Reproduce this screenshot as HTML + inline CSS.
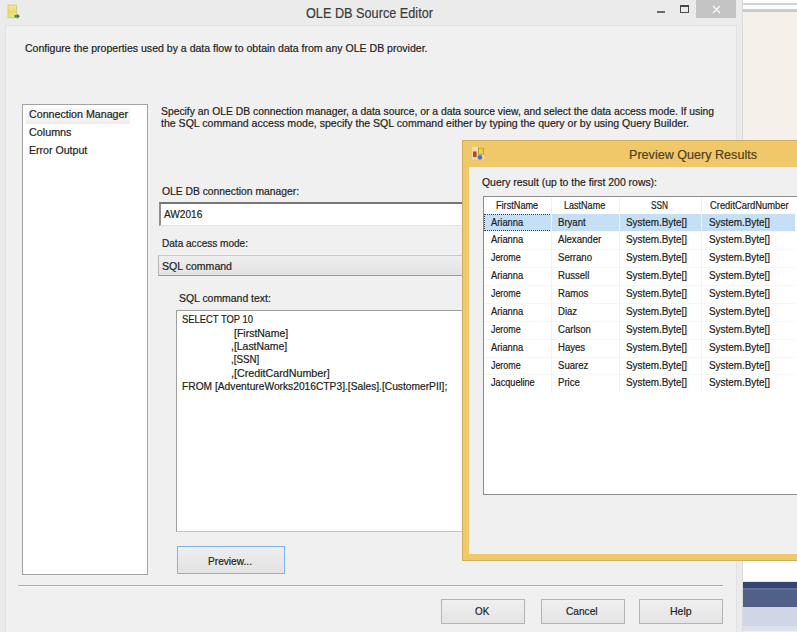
<!DOCTYPE html>
<html><head><meta charset="utf-8">
<style>
html,body{margin:0;padding:0;width:797px;height:632px;overflow:hidden;background:#f5f1ea;position:relative;}
*{box-sizing:border-box;}
.a{position:absolute;}
.t{position:absolute;font-family:"Liberation Sans",sans-serif;white-space:nowrap;color:#222;-webkit-text-stroke:0.2px currentColor;}
.btn{position:absolute;background:linear-gradient(#f0f0f0,#e4e4e4);border:1px solid #b4b4b4;}
</style></head><body>
<!-- right background window -->
<div class="a" style="left:743px;top:0;width:54px;height:3px;background:#fdfdfd"></div>
<div class="a" style="left:743px;top:3px;width:54px;height:2px;background:#d2d2d2"></div>
<div class="a" style="left:743px;top:5px;width:54px;height:4px;background:#fbfbfb"></div>
<div class="a" style="left:743px;top:9px;width:54px;height:3px;background:#c9cdd1"></div>
<div class="a" style="left:743px;top:545px;width:54px;height:37px;background:#ffffff"></div>
<div class="a" style="left:743px;top:581px;width:54px;height:1px;background:#e8e6e0"></div>
<div class="a" style="left:743px;top:582px;width:54px;height:6px;background:#34456f"></div>
<div class="a" style="left:743px;top:588px;width:54px;height:2px;background:#62719a"></div>
<div class="a" style="left:743px;top:590px;width:54px;height:17px;background:#516089"></div>
<div class="a" style="left:743px;top:607px;width:54px;height:19px;background:#d0d6e6"></div>
<div class="a" style="left:743px;top:626px;width:54px;height:5px;background:#dce1ed"></div>
<div class="a" style="left:743px;top:631px;width:54px;height:1px;background:#eef0f5"></div>

<!-- main dialog -->
<div class="a" style="left:0;top:0;width:743px;height:632px;background:#ebebeb;border-right:1px solid #d9d9d9"></div>
<div class="a" style="left:5px;top:25px;width:732px;height:607px;background:#f0f0f0;border:1px solid #e2e2e2;border-bottom:none"></div>
<!-- title icon -->
<svg class="a" style="left:0;top:0" width="24" height="24" viewBox="0 0 24 24">
 <defs><linearGradient id="yg" x1="0" x2="0" y1="0" y2="1"><stop offset="0" stop-color="#f4ea9a"/><stop offset="0.5" stop-color="#efd868"/><stop offset="1" stop-color="#e8e890"/></linearGradient></defs>
 <rect x="8" y="5" width="8.3" height="12.8" fill="url(#yg)" stroke="#c8b860" stroke-width="0.6"/>
 <path d="M14.5 15 L17 15 L17 13.8 L20 16.3 L17 18.8 L17 17.6 L14.5 17.6 Z" fill="#4a8a3a"/>
</svg>
<!-- caption buttons -->
<div class="a" style="left:657px;top:11px;width:8px;height:1.5px;background:#6a6a6a"></div>
<div class="a" style="left:680px;top:5px;width:9px;height:8px;border:1px solid #4a4a4a;border-top-width:2px"></div>
<div class="a" style="left:696px;top:0;width:40px;height:18px;background:#c4c4c4"></div>
<svg class="a" style="left:712px;top:5px" width="9" height="9" viewBox="0 0 9 9"><path d="M1 1 L8 8 M8 1 L1 8" stroke="#fafafa" stroke-width="1.3"/></svg>

<!-- list box -->
<div class="a" style="left:22px;top:104px;width:126px;height:471px;background:#fff;border:1px solid #a3a3a3"></div>
<div class="a" style="left:26px;top:108px;width:104px;height:16px;background:linear-gradient(#f8f8f8,#f4f4f4 70%,#ececec)"></div>

<div class="a" style="left:159px;top:202px;width:320px;height:24px;background:#fff;border:1px solid #e4e4e4;border-top:2px solid #777;border-left:2px solid #8e8e8e"></div>
<div class="a" style="left:158px;top:255px;width:320px;height:21px;background:linear-gradient(#efefef,#e3e3e3);border:1px solid #b5b5b5;border-top-color:#c8c8c8;border-bottom-color:#9c9c9c"></div>
<div class="a" style="left:176px;top:310px;width:300px;height:222px;background:#fff;border:1px solid #c4c4c4;border-top-color:#a0a0a0;border-left-color:#a0a0a0"></div>

<div class="a" style="left:177px;top:546px;width:108px;height:28px;background:linear-gradient(#eeeeee,#e3e3e3);border:1px solid #7eb4ea"></div>

<div class="a" style="left:18px;top:585px;width:705px;height:1px;background:#ababab"></div>
<div class="a" style="left:18px;top:586px;width:705px;height:1px;background:#fafafa"></div>

<div class="btn" style="left:441px;top:599px;width:84px;height:25px"></div>
<div class="btn" style="left:541px;top:599px;width:84px;height:25px"></div>
<div class="btn" style="left:639px;top:599px;width:84px;height:25px"></div>

<!-- preview window -->
<div class="a" style="left:462px;top:140px;width:340px;height:421px;background:#f0c86a;border:1px solid #cfad62"></div>
<div class="a" style="left:469px;top:167px;width:331px;height:387px;background:#f0f0f0"></div>
<svg class="a" style="left:465px;top:142px" width="30" height="25" viewBox="465 142 30 25">
 <rect x="472" y="147" width="12" height="12.5" fill="#f3e4c0" opacity="0.7"/>
 <rect x="473" y="151.5" width="3.6" height="5.6" fill="#a84a3a"/>
 <rect x="478.3" y="148" width="5.2" height="6.3" fill="#e8d040" stroke="#9a8a30" stroke-width="0.7"/>
 <circle cx="480" cy="157.4" r="2.4" fill="#4a70d8"/>
</svg>
<div class="a" style="left:483px;top:196px;width:320px;height:299px;background:#fff;border:1px solid #8c8c8c"></div>
<div class="a" style="left:551px;top:198px;width:1px;height:15px;background:#f0f0f0"></div>
<div class="a" style="left:619px;top:198px;width:1px;height:15px;background:#f0f0f0"></div>
<div class="a" style="left:701px;top:198px;width:1px;height:15px;background:#f0f0f0"></div>
<div class="a" style="left:484px;top:213.5px;width:311px;height:17.88px;background:#c4dff6"></div>
<div class="a" style="left:484px;top:213.5px;width:68px;height:17.88px;border:1px dotted #444"></div>
<div class="a" style="left:551px;top:213.50px;width:1px;height:17.88px;background:#f2f2f2"></div>
<div class="a" style="left:619px;top:213.50px;width:1px;height:17.88px;background:#f2f2f2"></div>
<div class="a" style="left:701px;top:213.50px;width:1px;height:17.88px;background:#f2f2f2"></div>
<div class="a" style="left:551px;top:231.38px;width:1px;height:17.88px;background:#f2f2f2"></div>
<div class="a" style="left:619px;top:231.38px;width:1px;height:17.88px;background:#f2f2f2"></div>
<div class="a" style="left:701px;top:231.38px;width:1px;height:17.88px;background:#f2f2f2"></div>
<div class="a" style="left:484px;top:231.38px;width:311px;height:1px;background:#f6f6f6"></div>
<div class="a" style="left:551px;top:249.26px;width:1px;height:17.88px;background:#f2f2f2"></div>
<div class="a" style="left:619px;top:249.26px;width:1px;height:17.88px;background:#f2f2f2"></div>
<div class="a" style="left:701px;top:249.26px;width:1px;height:17.88px;background:#f2f2f2"></div>
<div class="a" style="left:484px;top:249.26px;width:311px;height:1px;background:#f6f6f6"></div>
<div class="a" style="left:551px;top:267.14px;width:1px;height:17.88px;background:#f2f2f2"></div>
<div class="a" style="left:619px;top:267.14px;width:1px;height:17.88px;background:#f2f2f2"></div>
<div class="a" style="left:701px;top:267.14px;width:1px;height:17.88px;background:#f2f2f2"></div>
<div class="a" style="left:484px;top:267.14px;width:311px;height:1px;background:#f6f6f6"></div>
<div class="a" style="left:551px;top:285.02px;width:1px;height:17.88px;background:#f2f2f2"></div>
<div class="a" style="left:619px;top:285.02px;width:1px;height:17.88px;background:#f2f2f2"></div>
<div class="a" style="left:701px;top:285.02px;width:1px;height:17.88px;background:#f2f2f2"></div>
<div class="a" style="left:484px;top:285.02px;width:311px;height:1px;background:#f6f6f6"></div>
<div class="a" style="left:551px;top:302.90px;width:1px;height:17.88px;background:#f2f2f2"></div>
<div class="a" style="left:619px;top:302.90px;width:1px;height:17.88px;background:#f2f2f2"></div>
<div class="a" style="left:701px;top:302.90px;width:1px;height:17.88px;background:#f2f2f2"></div>
<div class="a" style="left:484px;top:302.90px;width:311px;height:1px;background:#f6f6f6"></div>
<div class="a" style="left:551px;top:320.78px;width:1px;height:17.88px;background:#f2f2f2"></div>
<div class="a" style="left:619px;top:320.78px;width:1px;height:17.88px;background:#f2f2f2"></div>
<div class="a" style="left:701px;top:320.78px;width:1px;height:17.88px;background:#f2f2f2"></div>
<div class="a" style="left:484px;top:320.78px;width:311px;height:1px;background:#f6f6f6"></div>
<div class="a" style="left:551px;top:338.66px;width:1px;height:17.88px;background:#f2f2f2"></div>
<div class="a" style="left:619px;top:338.66px;width:1px;height:17.88px;background:#f2f2f2"></div>
<div class="a" style="left:701px;top:338.66px;width:1px;height:17.88px;background:#f2f2f2"></div>
<div class="a" style="left:484px;top:338.66px;width:311px;height:1px;background:#f6f6f6"></div>
<div class="a" style="left:551px;top:356.54px;width:1px;height:17.88px;background:#f2f2f2"></div>
<div class="a" style="left:619px;top:356.54px;width:1px;height:17.88px;background:#f2f2f2"></div>
<div class="a" style="left:701px;top:356.54px;width:1px;height:17.88px;background:#f2f2f2"></div>
<div class="a" style="left:484px;top:356.54px;width:311px;height:1px;background:#f6f6f6"></div>
<div class="a" style="left:551px;top:374.42px;width:1px;height:17.88px;background:#f2f2f2"></div>
<div class="a" style="left:619px;top:374.42px;width:1px;height:17.88px;background:#f2f2f2"></div>
<div class="a" style="left:701px;top:374.42px;width:1px;height:17.88px;background:#f2f2f2"></div>
<div class="a" style="left:484px;top:374.42px;width:311px;height:1px;background:#f6f6f6"></div>
<div class="t" style="left:306.0px;top:4.62px;font-size:13.8px;line-height:17px;transform:scaleX(0.9201);transform-origin:0 0;color:#3c3c3c">OLE DB Source Editor</div>
<div class="t" style="left:25.3px;top:41.19px;font-size:11px;line-height:14px;transform:scaleX(0.9582);transform-origin:0 0;">Configure the properties used by a data flow to obtain data from any OLE DB provider.</div>
<div class="t" style="left:28.7px;top:107.49px;font-size:11px;line-height:14px;transform:scaleX(0.9694);transform-origin:0 0;">Connection Manager</div>
<div class="t" style="left:28.7px;top:124.99px;font-size:11px;line-height:14px;transform:scaleX(0.9791);transform-origin:0 0;">Columns</div>
<div class="t" style="left:28.7px;top:142.59px;font-size:11px;line-height:14px;transform:scaleX(0.9631);transform-origin:0 0;">Error Output</div>
<div class="t" style="left:161.3px;top:104.19px;font-size:11px;line-height:14px;transform:scaleX(0.9401);transform-origin:0 0;">Specify an OLE DB connection manager, a data source, or a data source view, and select the data access mode. If using</div>
<div class="t" style="left:161.3px;top:116.49px;font-size:11px;line-height:14px;transform:scaleX(0.9599);transform-origin:0 0;">the SQL command access mode, specify the SQL command either by typing the query or by using Query Builder.</div>
<div class="t" style="left:161.5px;top:183.59px;font-size:11px;line-height:14px;transform:scaleX(0.9375);transform-origin:0 0;">OLE DB connection manager:</div>
<div class="t" style="left:163.7px;top:207.19px;font-size:11px;line-height:14px;transform:scaleX(0.9163);transform-origin:0 0;">AW2016</div>
<div class="t" style="left:161.5px;top:235.69px;font-size:11px;line-height:14px;transform:scaleX(0.9134);transform-origin:0 0;">Data access mode:</div>
<div class="t" style="left:161.5px;top:258.99px;font-size:11px;line-height:14px;transform:scaleX(0.9593);transform-origin:0 0;">SQL command</div>
<div class="t" style="left:179.0px;top:291.19px;font-size:11px;line-height:14px;transform:scaleX(0.9482);transform-origin:0 0;">SQL command text:</div>
<div class="t" style="left:181.8px;top:313.00px;font-size:10.4px;line-height:13px;transform:scaleX(0.9059);transform-origin:0 0;">SELECT TOP 10</div>
<div class="t" style="left:234.3px;top:326.80px;font-size:10.4px;line-height:13px;transform:scaleX(1.0093);transform-origin:0 0;">[FirstName]</div>
<div class="t" style="left:231.3px;top:340.30px;font-size:10.4px;line-height:13px;transform:scaleX(1.0030);transform-origin:0 0;">,[LastName]</div>
<div class="t" style="left:231.3px;top:353.40px;font-size:10.4px;line-height:13px;transform:scaleX(0.9424);transform-origin:0 0;">,[SSN]</div>
<div class="t" style="left:231.3px;top:366.70px;font-size:10.4px;line-height:13px;transform:scaleX(1.0307);transform-origin:0 0;">,[CreditCardNumber]</div>
<div class="t" style="left:181.8px;top:379.50px;font-size:10.4px;line-height:13px;transform:scaleX(0.9845);transform-origin:0 0;">FROM [AdventureWorks2016CTP3].[Sales].[CustomerPII];</div>
<div class="t" style="left:208.3px;top:553.69px;font-size:11px;line-height:14px;transform:scaleX(0.9227);transform-origin:0 0;">Preview...</div>
<div class="t" style="left:475.1px;top:604.19px;font-size:11px;line-height:14px;transform:scaleX(0.8990);transform-origin:0 0;">OK</div>
<div class="t" style="left:566.0px;top:604.19px;font-size:11px;line-height:14px;transform:scaleX(0.9226);transform-origin:0 0;">Cancel</div>
<div class="t" style="left:670.0px;top:604.19px;font-size:11px;line-height:14px;transform:scaleX(0.9547);transform-origin:0 0;">Help</div>
<div class="t" style="left:629.2px;top:146.19px;font-size:13.6px;line-height:17px;transform:scaleX(0.9259);transform-origin:0 0;color:#4e3f1a">Preview Query Results</div>
<div class="t" style="left:482.0px;top:175.49px;font-size:11px;line-height:14px;transform:scaleX(0.9478);transform-origin:0 0;">Query result (up to the first 200 rows):</div>
<div class="t" style="left:496.0px;top:200.03px;font-size:10px;line-height:12px;transform:scaleX(0.9149);transform-origin:0 0;">FirstName</div>
<div class="t" style="left:564.3px;top:200.03px;font-size:10px;line-height:12px;transform:scaleX(0.9039);transform-origin:0 0;">LastName</div>
<div class="t" style="left:651.3px;top:200.03px;font-size:10px;line-height:12px;transform:scaleX(0.8267);transform-origin:0 0;">SSN</div>
<div class="t" style="left:709.7px;top:200.03px;font-size:10px;line-height:12px;transform:scaleX(0.9366);transform-origin:0 0;">CreditCardNumber</div>
<div class="t" style="left:491.0px;top:216.53px;font-size:10px;line-height:12px;transform:scaleX(0.9342);transform-origin:0 0;">Arianna</div>
<div class="t" style="left:558.3px;top:216.53px;font-size:10px;line-height:12px;transform:scaleX(0.9558);transform-origin:0 0;">Bryant</div>
<div class="t" style="left:626.0px;top:216.53px;font-size:10px;line-height:12px;transform:scaleX(0.9889);transform-origin:0 0;">System.Byte[]</div>
<div class="t" style="left:708.6px;top:216.53px;font-size:10px;line-height:12px;transform:scaleX(0.9889);transform-origin:0 0;">System.Byte[]</div>
<div class="t" style="left:491.0px;top:234.41px;font-size:10px;line-height:12px;transform:scaleX(0.9342);transform-origin:0 0;">Arianna</div>
<div class="t" style="left:558.3px;top:234.41px;font-size:10px;line-height:12px;transform:scaleX(0.9593);transform-origin:0 0;">Alexander</div>
<div class="t" style="left:626.0px;top:234.41px;font-size:10px;line-height:12px;transform:scaleX(0.9889);transform-origin:0 0;">System.Byte[]</div>
<div class="t" style="left:708.6px;top:234.41px;font-size:10px;line-height:12px;transform:scaleX(0.9889);transform-origin:0 0;">System.Byte[]</div>
<div class="t" style="left:491.0px;top:252.29px;font-size:10px;line-height:12px;transform:scaleX(0.8873);transform-origin:0 0;">Jerome</div>
<div class="t" style="left:558.3px;top:252.29px;font-size:10px;line-height:12px;transform:scaleX(0.9558);transform-origin:0 0;">Serrano</div>
<div class="t" style="left:626.0px;top:252.29px;font-size:10px;line-height:12px;transform:scaleX(0.9889);transform-origin:0 0;">System.Byte[]</div>
<div class="t" style="left:708.6px;top:252.29px;font-size:10px;line-height:12px;transform:scaleX(0.9889);transform-origin:0 0;">System.Byte[]</div>
<div class="t" style="left:491.0px;top:270.18px;font-size:10px;line-height:12px;transform:scaleX(0.9342);transform-origin:0 0;">Arianna</div>
<div class="t" style="left:558.3px;top:270.18px;font-size:10px;line-height:12px;transform:scaleX(0.9558);transform-origin:0 0;">Russell</div>
<div class="t" style="left:626.0px;top:270.18px;font-size:10px;line-height:12px;transform:scaleX(0.9889);transform-origin:0 0;">System.Byte[]</div>
<div class="t" style="left:708.6px;top:270.18px;font-size:10px;line-height:12px;transform:scaleX(0.9889);transform-origin:0 0;">System.Byte[]</div>
<div class="t" style="left:491.0px;top:288.06px;font-size:10px;line-height:12px;transform:scaleX(0.8873);transform-origin:0 0;">Jerome</div>
<div class="t" style="left:558.3px;top:288.06px;font-size:10px;line-height:12px;transform:scaleX(0.9558);transform-origin:0 0;">Ramos</div>
<div class="t" style="left:626.0px;top:288.06px;font-size:10px;line-height:12px;transform:scaleX(0.9889);transform-origin:0 0;">System.Byte[]</div>
<div class="t" style="left:708.6px;top:288.06px;font-size:10px;line-height:12px;transform:scaleX(0.9889);transform-origin:0 0;">System.Byte[]</div>
<div class="t" style="left:491.0px;top:305.94px;font-size:10px;line-height:12px;transform:scaleX(0.9342);transform-origin:0 0;">Arianna</div>
<div class="t" style="left:558.3px;top:305.94px;font-size:10px;line-height:12px;transform:scaleX(0.9558);transform-origin:0 0;">Diaz</div>
<div class="t" style="left:626.0px;top:305.94px;font-size:10px;line-height:12px;transform:scaleX(0.9889);transform-origin:0 0;">System.Byte[]</div>
<div class="t" style="left:708.6px;top:305.94px;font-size:10px;line-height:12px;transform:scaleX(0.9889);transform-origin:0 0;">System.Byte[]</div>
<div class="t" style="left:491.0px;top:323.81px;font-size:10px;line-height:12px;transform:scaleX(0.8873);transform-origin:0 0;">Jerome</div>
<div class="t" style="left:558.3px;top:323.81px;font-size:10px;line-height:12px;transform:scaleX(0.9558);transform-origin:0 0;">Carlson</div>
<div class="t" style="left:626.0px;top:323.81px;font-size:10px;line-height:12px;transform:scaleX(0.9889);transform-origin:0 0;">System.Byte[]</div>
<div class="t" style="left:708.6px;top:323.81px;font-size:10px;line-height:12px;transform:scaleX(0.9889);transform-origin:0 0;">System.Byte[]</div>
<div class="t" style="left:491.0px;top:341.69px;font-size:10px;line-height:12px;transform:scaleX(0.9342);transform-origin:0 0;">Arianna</div>
<div class="t" style="left:558.3px;top:341.69px;font-size:10px;line-height:12px;transform:scaleX(0.9558);transform-origin:0 0;">Hayes</div>
<div class="t" style="left:626.0px;top:341.69px;font-size:10px;line-height:12px;transform:scaleX(0.9889);transform-origin:0 0;">System.Byte[]</div>
<div class="t" style="left:708.6px;top:341.69px;font-size:10px;line-height:12px;transform:scaleX(0.9889);transform-origin:0 0;">System.Byte[]</div>
<div class="t" style="left:491.0px;top:359.57px;font-size:10px;line-height:12px;transform:scaleX(0.8873);transform-origin:0 0;">Jerome</div>
<div class="t" style="left:558.3px;top:359.57px;font-size:10px;line-height:12px;transform:scaleX(0.9558);transform-origin:0 0;">Suarez</div>
<div class="t" style="left:626.0px;top:359.57px;font-size:10px;line-height:12px;transform:scaleX(0.9889);transform-origin:0 0;">System.Byte[]</div>
<div class="t" style="left:708.6px;top:359.57px;font-size:10px;line-height:12px;transform:scaleX(0.9889);transform-origin:0 0;">System.Byte[]</div>
<div class="t" style="left:491.0px;top:377.45px;font-size:10px;line-height:12px;transform:scaleX(0.9140);transform-origin:0 0;">Jacqueline</div>
<div class="t" style="left:558.3px;top:377.45px;font-size:10px;line-height:12px;transform:scaleX(0.9558);transform-origin:0 0;">Price</div>
<div class="t" style="left:626.0px;top:377.45px;font-size:10px;line-height:12px;transform:scaleX(0.9889);transform-origin:0 0;">System.Byte[]</div>
<div class="t" style="left:708.6px;top:377.45px;font-size:10px;line-height:12px;transform:scaleX(0.9889);transform-origin:0 0;">System.Byte[]</div>
</body></html>
